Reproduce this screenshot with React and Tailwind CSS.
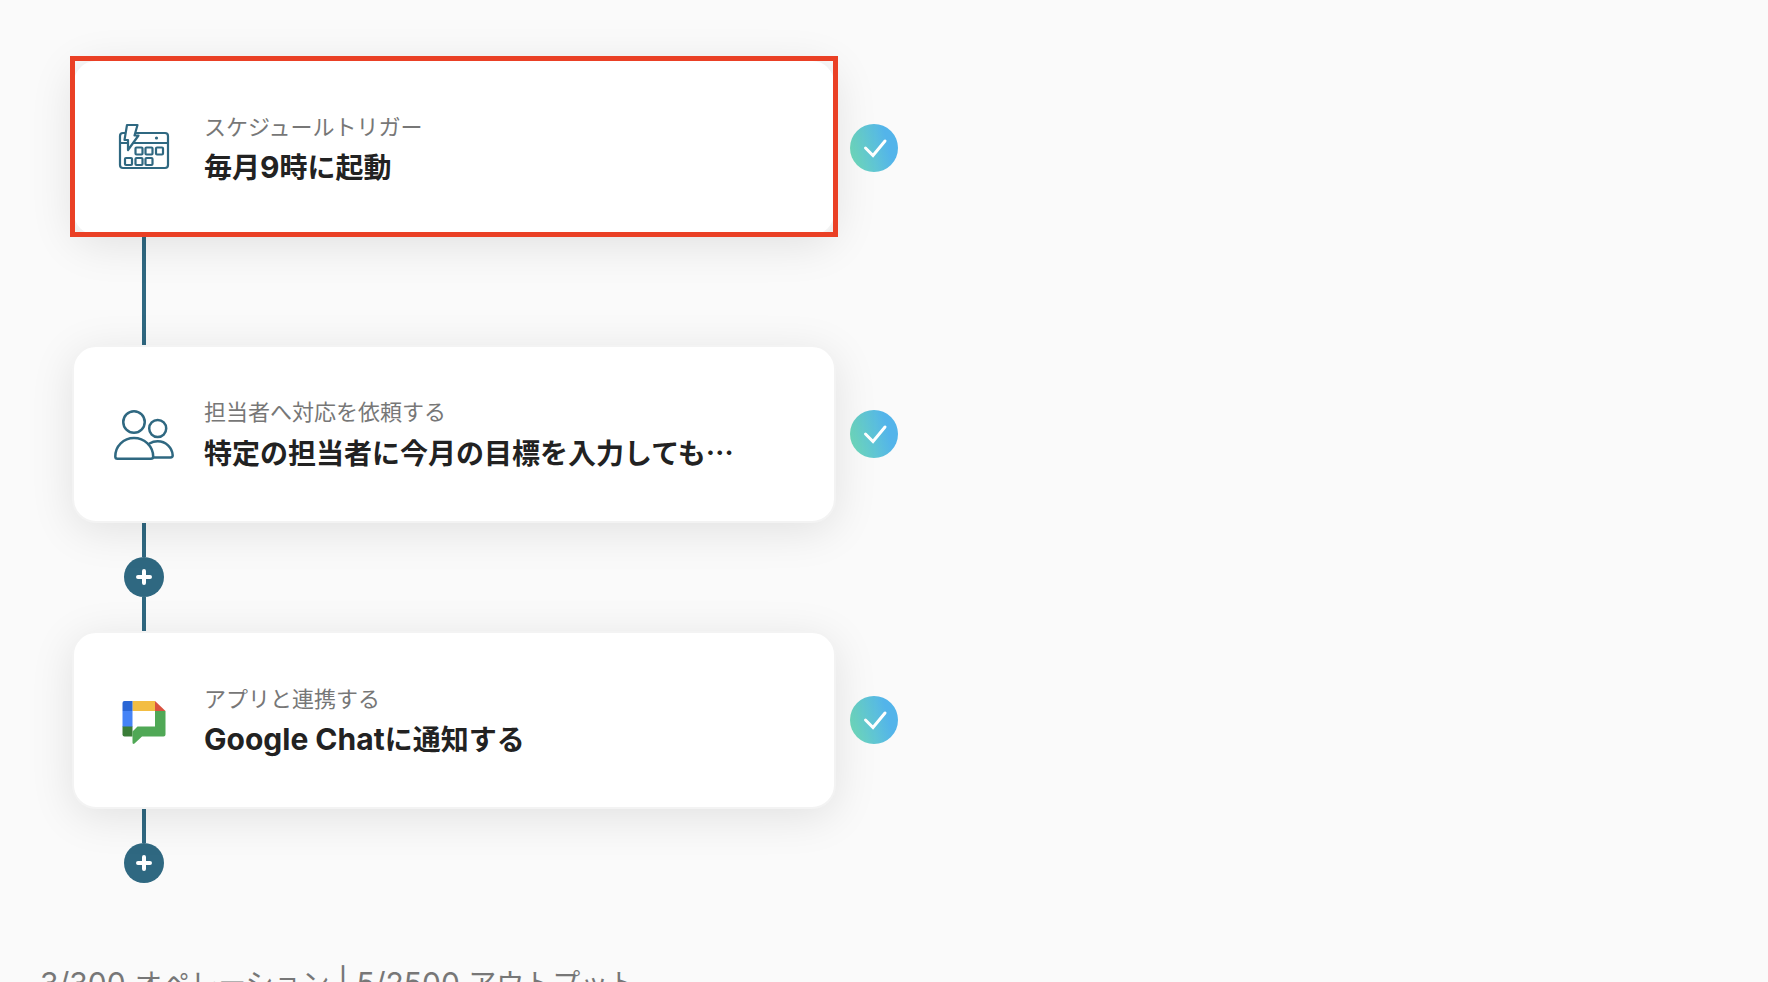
const STEPS = [
  { id: 'trigger', kind: 'スケジュールトリガー', title: '毎月9時に起動', Icon: ScheduleIcon, selected: true },
  {
    id: 'request',
    kind: '担当者へ対応を依頼する',
    title: '特定の担当者に今月の目標を入力しても…',
    Icon: PeopleIcon,
    canAdd: true,
  },
  { id: 'chat', kind: 'アプリと連携する', title: 'Google Chatに通知する', Icon: GoogleChatIcon, canAdd: true },
];

function ScheduleIcon() {
  return (
    <svg viewBox="0 0 60 60" className="size-[60px] shrink-0" fill="none" stroke="#2f6881" strokeWidth="2.2" strokeLinejoin="round" aria-hidden="true">
      <rect x="6" y="15" width="48" height="35" rx="3" />
      <path d="M6 25h48" />
      <circle cx="42.5" cy="20" r="1.6" fill="#2f6881" stroke="none" />
      <path d="M13 7H23.5l-3 10.500h4L14 32V22h-3.500z" fill="#fff" />
      <rect x="21.500" y="29.500" width="7" height="7" rx="1" />
      <rect x="31.500" y="29.500" width="7" height="7" rx="1" />
      <rect x="42" y="29.500" width="7" height="7" rx="1" />
      <rect x="11" y="40" width="7" height="7" rx="1" />
      <rect x="21.500" y="40" width="7" height="7" rx="1" />
      <rect x="31.500" y="40" width="7" height="7" rx="1" />
    </svg>
  );
}

function PeopleIcon() {
  return (
    <svg viewBox="0 -1 60 60" className="size-[60px] shrink-0" fill="none" stroke="#2f6881" strokeWidth="2.5" strokeLinejoin="round" strokeLinecap="round" aria-hidden="true">
      <circle cx="20" cy="17" r="10.750" />
      <circle cx="43.700" cy="23.500" r="8.500" />
      <path d="M1.300 51.500C1.300 41 9.500 33 20 33s19 8 19.200 18.500q0 2.300-2.300 2.300H3.500q-2.200 0-2.200-2.300z" />
      <path d="M35.500 38.500c2.500-1.500 5-2.200 8.200-2.200 8 0 14.500 6.200 15 14q0 2.200-2.200 2.200H39.500" />
    </svg>
  );
}

function GoogleChatIcon() {
  return (
    <svg viewBox="0 -5 60 60" className="size-[60px] shrink-0" aria-hidden="true">
      <path d="M18.500 6H41v10H18.500z" fill="#f3bd42" />
      <path d="M10.500 6h8v10h-10V8q0-2 2-2z" fill="#2a66d5" />
      <path d="M8.500 16h10v16h-10z" fill="#4583f6" />
      <path d="M8.500 31.500h10v10h-8q-2 0-2-2z" fill="#3a7d38" />
      <path d="M41 6l10.500 10H41z" fill="#d9513f" />
      <path d="M41 16h10.500v23.500q0 2-2 2H28l-7.500 7q-2 1.200-2-1V36.500l5-5H41z" fill="#50a856" />
    </svg>
  );
}

// Latin runs are set one step larger than the kana around them,
// and the ellipsis comes from the Japanese font so that it sits mid-line.
function MixedText({ children }) {
  return children.split(/([\x20-\x7e]+|…)/).map((part, index) => {
    if (part === '…') {
      return <span key={index} lang="ja" className="font-['Noto_Sans_CJK_JP',sans-serif]">{part}</span>;
    }
    return index % 2 ? <span key={index} className="text-[30px]">{part}</span> : part;
  });
}

function DoneBadge() {
  return (
    <span
      role="img"
      aria-label="完了"
      className="flex size-12 shrink-0 items-center justify-center rounded-full bg-linear-[75deg] from-[#6ed8bc] from-10% to-[#53b4ea] to-75%"
    >
      <svg viewBox="0 0 48 48" className="size-12" fill="none" stroke="#fff" strokeWidth="3" strokeLinecap="round" aria-hidden="true">
        <path d="M15.500 24l7.500 7.500L35 17" />
      </svg>
    </span>
  );
}

function Connector({ canAdd, last }) {
  return (
    <div className="ml-[52px] flex w-10 flex-col items-center">
      <div className={`w-1 bg-[#2f6881] ${canAdd ? 'h-[34px]' : 'h-[108px]'}`} />
      {canAdd && (
        <button
          type="button"
          aria-label="オペレーションを追加"
          className="flex size-10 items-center justify-center rounded-full bg-[#2f6881]"
        >
          <svg viewBox="0 0 16 16" className="size-4" stroke="#fff" strokeWidth="4" strokeLinecap="round" aria-hidden="true">
            <path d="M8 2v12M2 8h12" />
          </svg>
        </button>
      )}
      {canAdd && !last && <div className="h-[34px] w-1 bg-[#2f6881]" />}
    </div>
  );
}

function StepCard({ kind, title, Icon, selected }) {
  return (
    <div className="flex items-center gap-[14px]">
      <div className="relative flex h-[178px] w-full max-w-[764px] min-w-0 items-center gap-[30px] rounded-3xl border-2 border-[#f3f3f3] bg-white px-10 shadow-[0_8px_44px_rgba(0,0,0,0.1)]">
        <Icon />
        <div className="min-w-0 pt-1">
          <p className="text-[22px] leading-8 text-[#777]">{kind}</p>
          <h2 className="mt-[2px] truncate text-[28px] leading-[44px] font-bold text-[#222]">
            <MixedText>{title}</MixedText>
          </h2>
        </div>
        {selected && (
          <div className="pointer-events-none absolute -inset-x-1 -top-[5px] -bottom-[2px] border-[5px] border-[#ea4025]" />
        )}
      </div>
      <DoneBadge />
    </div>
  );
}

export default function App() {
  return (
    <div className="h-screen overflow-hidden bg-[#fafafa] font-[Inter,'Noto_Sans_CJK_JP',sans-serif]">
      <main className="px-[72px] pt-[59px]">
        {STEPS.map(({ id, canAdd, ...step }, index) => (
          <section key={id}>
            <StepCard {...step} />
            <Connector canAdd={canAdd} last={index === STEPS.length - 1} />
          </section>
        ))}
      </main>
      <p className="mt-20 px-10 text-[28px] leading-10 text-[#777]">
        <MixedText>3/300 オペレーション | 5/2500 アウトプット</MixedText>
      </p>
    </div>
  );
}
